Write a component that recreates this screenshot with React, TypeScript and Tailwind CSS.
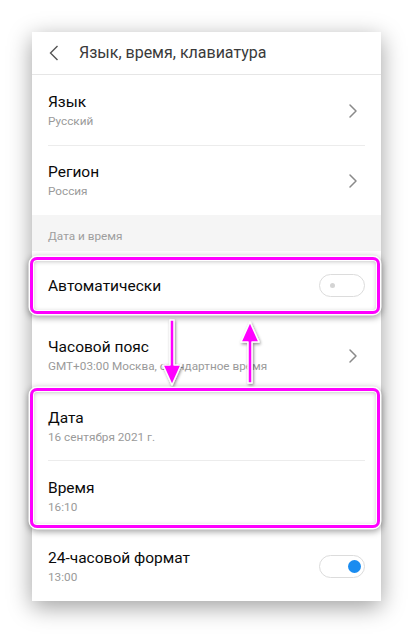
import { ChevronRight } from "lucide-react";

interface RowProps {
  title: string;
  subtitle?: string;
  right?: React.ReactNode;
  divider?: boolean;
  h?: string;
}

const Row = ({ title, subtitle, right, divider, h = "h-[70px]" }: RowProps) => (
  <div className={`relative flex items-center ${h} px-4`}>
    <div className="flex flex-1 flex-col">
      <span className="text-[15.5px] leading-[20px] text-[#0a0a0a]">{title}</span>
      {subtitle && (
        <span className="mt-[1px] text-[11.75px] leading-[16px] text-[#9a9a9a]">{subtitle}</span>
      )}
    </div>
    {right}
    {divider && <div className="absolute bottom-0 left-4 right-4 h-px bg-[#ececec]" />}
  </div>
);

const Chevron = () => <ChevronRight className="h-[24px] w-[24px] text-[#8a8a8a]" strokeWidth={1.5} />;

const Toggle = ({ on }: { on?: boolean }) => (
  <div className="flex h-[23px] w-[46px] items-center rounded-full border-[1.5px] border-[#dcdcdc] bg-white px-[3px]">
    {on ? (
      <div className="ml-auto h-[13px] w-[13px] rounded-full bg-[#1a8cf0]" />
    ) : (
      <div className="ml-[7px] h-[5px] w-[5px] rounded-full bg-[#d4d4d4]" />
    )}
  </div>
);

const Highlight = ({ className }: { className: string }) => (
  <div
    className={`pointer-events-none absolute rounded-[7px] border-[3px] border-[#f0f] shadow-[0_0_0_1.5px_#fff,0_2px_6px_2px_rgba(0,0,0,0.35),inset_0_0_0_1px_#fff,inset_0_1px_5px_rgba(0,0,0,0.3)] ${className}`}
  />
);

export default function App() {
  return (
    <div className="min-h-[634px] bg-white pt-8 pl-8 font-['Roboto',sans-serif]">
      <div className="relative w-[349px] bg-white shadow-[0_6px_22px_rgba(0,0,0,0.38)]">
        {/* header */}
        <div className="flex h-[43px] items-center border-b border-[#e6e6e6] pl-[17px]">
          <svg width="10" height="16" viewBox="0 0 10 16" fill="none">
            <path d="M8.5 1 L1.5 8 L8.5 15" stroke="#555" strokeWidth="1.4" />
          </svg>
          <span className="ml-[20px] text-[16px] text-[#3a3a3a]">Язык, время, клавиатура</span>
        </div>

        <Row title="Язык" subtitle="Русский" right={<Chevron />} divider h="h-[71px]" />
        <Row title="Регион" subtitle="Россия" right={<Chevron />} h="h-[69px]" />

        <div className="flex h-[36px] items-end bg-[#f5f5f5] px-4 pb-[5px]">
          <span className="text-[11.75px] text-[#9e9e9e]">Дата и время</span>
        </div>

        <Row title="Автоматически" right={<Toggle />} h="h-[69px]" />
        <Row title="Часовой пояс" subtitle="GMT+03:00 Москва, стандартное время" right={<Chevron />} h="h-[71px]" />
        <Row title="Дата" subtitle="16 сентября 2021 г." divider />
        <Row title="Время" subtitle="16:10" />
        <Row title="24-часовой формат" subtitle="13:00" right={<Toggle on />} />

        {/* annotations */}
        <Highlight className="left-[-2px] top-[225px] h-[57px] w-[350px]" />
        <Highlight className="left-[-2px] top-[356px] h-[140px] w-[350px]" />

        <svg className="pointer-events-none absolute left-0 top-[285px]" width="349" height="70" viewBox="0 0 349 70">
          <defs>
            <filter id="sh" x="-50%" y="-20%" width="200%" height="140%">
              <feDropShadow dx="1" dy="1.5" stdDeviation="1.5" floodColor="#000" floodOpacity="0.45" />
            </filter>
          </defs>
          <g filter="url(#sh)" stroke="#fff" strokeWidth="1.5" strokeLinejoin="round" fill="#f0f">
            <path d="M138 3 L142 3 L142 48 L149 48 L140 68 L131 48 L138 48 Z" />
            <path d="M216 66 L220 66 L220 25 L227 25 L218 5 L209 25 L216 25 Z" />
          </g>
        </svg>
      </div>
    </div>
  );
}
